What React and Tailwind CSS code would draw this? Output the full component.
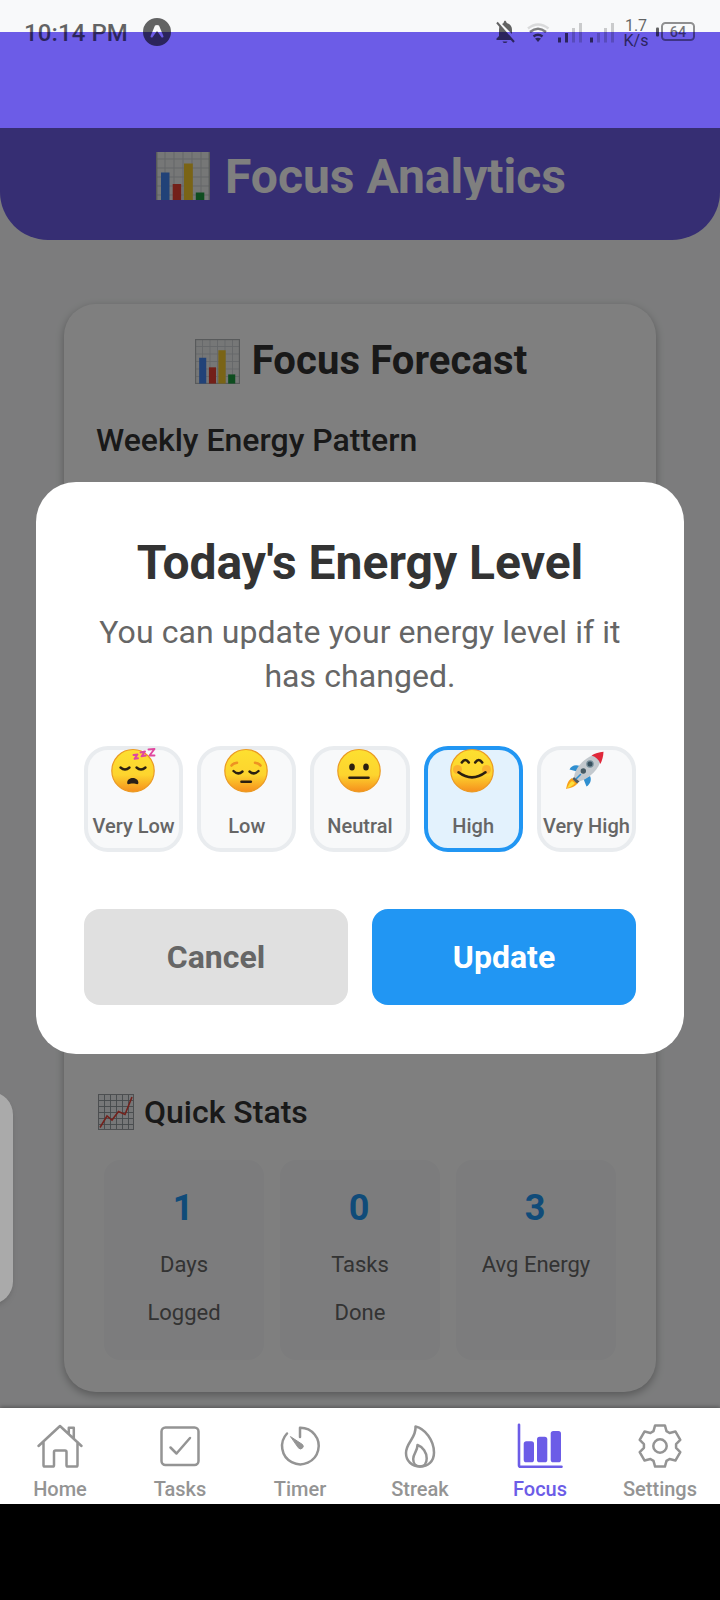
import React from "react";

function BarChartEmoji({ className }) {
  return (
    <svg className={className} viewBox="0 0 54 54" preserveAspectRatio="none">
      <rect width="54" height="54" fill="#eceeef" />
      <path d="M9 0V54M18 0V54M27 0V54M36 0V54M45 0V54M0 9H54M0 18H54M0 27H54M0 36H54M0 45H54" stroke="#c9cdd0" strokeWidth="1" />
      <rect x="0.7" y="0.7" width="52.6" height="52.6" fill="none" stroke="#b0b4b7" strokeWidth="1.4" />
      <rect x="5" y="22.5" width="8.500" height="31" fill="#4384f0" />
      <rect x="16.700" y="34" width="8.500" height="19.500" fill="#e64133" />
      <rect x="28" y="13.500" width="8.800" height="40" fill="#f5c92c" />
      <rect x="39.800" y="42.500" width="8.500" height="11" fill="#1c9a3e" />
    </svg>
  );
}

function LineChartEmoji({ className }) {
  return (
    <svg className={className} viewBox="0 0 36 36">
      <rect width="36" height="36" fill="#eceff1" />
      <path d="M6.500 0V36M12.500 0V36M18.500 0V36M24.500 0V36M30.500 0V36M0 6.500H36M0 12.500H36M0 18.500H36M0 24.500H36M0 30.500H36" stroke="#8b9296" strokeWidth="0.9" />
      <rect x="0.5" y="0.500" width="35" height="35" fill="none" stroke="#9a9fa3" />
      <path d="M2 33.500L9 22L14 26L20.500 17.500L27 20.500L34 3" fill="none" stroke="#e5443a" strokeWidth="1.6" />
    </svg>
  );
}

function Face({ children }) {
  return (
    <svg className="-mt-px mr-0.5 h-11 w-11 overflow-visible" viewBox="0 0 44 44" fill="none" strokeLinecap="round" strokeLinejoin="round">
      <defs>
        <linearGradient id="skin" x1="0" y1="0" x2="0" y2="1">
          <stop offset="0" stopColor="#fde030" />
          <stop offset="0.6" stopColor="#fdd42e" />
          <stop offset="1" stopColor="#f68f1d" />
        </linearGradient>
      </defs>
      <circle cx="22" cy="21.700" r="21.200" fill="url(#skin)" stroke="#eb9a22" strokeWidth="1.2" />
      {children}
    </svg>
  );
}

const faces = {
  sleepy: (
    <Face>
      <path d="M9.500 18.500Q14 22.500 18.500 18.500M25.500 18.500Q30 22.500 34.500 18.500" stroke="#2b1f10" strokeWidth="2.400" />
      <path d="M16.200 33.500C16.500 27.500 27 27.500 27.400 33.500C27.500 36.500 25 34.500 21.800 34.500C18.500 34.500 16 36.500 16.200 33.500Z" fill="#2b2018" />
      <path d="M22.500 6L26.500 5.500L23.500 9.800L27 9.300M29.500 3.500L34 2.500L30.500 7.300L34.800 6.500M37.500 0.500L43.500 0L38.500 6.500L43.500 6.500" stroke="#e0479e" strokeWidth="1.9" />
    </Face>
  ),
  pensive: (
    <Face>
      <path d="M9.500 22Q14 26.500 18.500 22.500M25.500 22.500Q30 26.500 34.500 22" stroke="#2b1f10" strokeWidth="2.400" />
      <path d="M7.500 16.500Q9.500 14 13 13.800M31 13.800Q34.500 14 36.500 16.500" stroke="#ee9322" strokeWidth="2.600" />
      <path d="M17.500 32.700H26.800" stroke="#2b1f10" strokeWidth="2.600" />
    </Face>
  ),
  neutral: (
    <Face>
      <ellipse cx="15" cy="18" rx="2.800" ry="3.600" fill="#2b1f10" />
      <ellipse cx="29" cy="18" rx="2.800" ry="3.600" fill="#2b1f10" />
      <path d="M12.500 28.800H31.500" stroke="#2b1f10" strokeWidth="2.600" />
    </Face>
  ),
  smiling: (
    <Face>
      <circle cx="7.500" cy="20.500" r="4.500" fill="#f9852f" fillOpacity="0.450" />
      <circle cx="36.500" cy="20.500" r="4.500" fill="#f9852f" fillOpacity="0.450" />
      <path d="M11.800 13.500Q15.300 8.500 18.800 13.500M25.200 13.500Q28.700 8.500 32.200 13.500" stroke="#2b1f10" strokeWidth="2.600" />
      <path d="M8.500 23.300Q22 33.500 35.500 23.300" stroke="#2b1f10" strokeWidth="2.600" />
    </Face>
  ),
  rocket: (
    <svg className="-mt-px mr-0.5 h-11 w-11 overflow-visible" viewBox="0 0 44 44">
      <path d="M9 29C4 32 4 37 3 40C7 39 12 38 15 34Z" fill="#f9a11b" />
      <path d="M9 32C6.500 34 5.500 36.500 4 39C8 38 10 36.500 12 34Z" fill="#fde03a" />
      <path d="M17 17C12 15 8 17 6.500 20.500L14 22.500Z" fill="#2f8fd0" />
      <path d="M27 27C29 31 27 35.500 23.500 37.500L20.500 30Z" fill="#2f8fd0" />
      <path d="M11 28C12 20 20 7 40 3C38 20 26 30 16 32.500Z" fill="#c3c9ce" />
      <path d="M11 28L9.500 30L14 34.500L16.500 32.500Z" fill="#515c63" />
      <path d="M28.500 6.500C32 4.500 36 3.300 40.500 2.800C40.300 7.500 39.200 11.500 37.400 15C36 10.500 33 8 28.500 6.500Z" fill="#e0283a" />
      <circle cx="27" cy="15" r="3.800" fill="#78909c" />
      <circle cx="27" cy="15" r="2.500" fill="#37505e" />
      <circle cx="20.300" cy="22" r="2.700" fill="#455a64" />
      <path d="M13.500 29.500L17.500 25.500" stroke="#2f8fd0" strokeWidth="1.500" strokeLinecap="round" />
    </svg>
  ),
};

const toothPoints = [[-6.500, -14.800], [-4.900, -20.600], [4.900, -20.600], [6.500, -14.800]];
const gearPath =
  "M" +
  [0, 60, 120, 180, 240, 300]
    .flatMap((deg) => {
      const a = (deg * Math.PI) / 180;
      return toothPoints.map(([x, y]) =>
        `${(24 + x * Math.cos(a) - y * Math.sin(a)).toFixed(2)} ${(24 + x * Math.sin(a) + y * Math.cos(a)).toFixed(2)}`
      );
    })
    .join("L") +
  "Z";

const tabs = [
  {
    label: "Home",
    icon: <path d="M2.500 24L24 4L45.500 24M7.500 20V43.200Q7.500 44.500 8.800 44.500H16.800Q18 44.500 18 43.200V30Q18 28.500 19.500 28.500H29Q30.500 28.500 30.500 30V43.200Q30.500 44.500 31.800 44.500H40.200Q41.500 44.500 41.500 43.200V20M32.800 11V5.700H37.800V16" />,
  },
  {
    label: "Tasks",
    icon: (
      <>
        <rect x="5.500" y="5.500" width="37" height="37.500" rx="4" />
        <path d="M14.500 25.500L20.500 31.500L34 16" />
      </>
    ),
  },
  {
    label: "Timer",
    icon: (
      <>
        <path d="M24 15V5.700A18.300 18.300 0 1 1 11 11.500" />
        <path d="M14.800 14.800L26.500 22.500A2.600 2.600 0 0 1 22.500 26Z" fill="currentColor" strokeWidth="1" />
      </>
    ),
  },
  {
    label: "Streak",
    icon: (
      <>
        <path d="M19.500 4.500C29 6.500 38 18.500 38 30.500C38 39.500 32 44.500 24 44.500C16 44.500 10 39 10 31C10 20.500 20.500 16 19.500 4.500Z" />
        <path d="M21.500 23C27 25 30.700 30.500 30.700 36.500C30.700 41.500 28 44.500 24 44.500C20 44.500 17.200 41.500 17.200 37C17.200 31.500 21.500 29.500 21.500 23Z" />
      </>
    ),
  },
  {
    label: "Focus",
    active: true,
    icon: (
      <>
        <path d="M3 2.800V43.300Q3 44.800 4.500 44.800H45.500" strokeWidth="2.600" />
        <g fill="currentColor" stroke="none">
          <rect x="7.700" y="19.300" width="10.300" height="21" rx="2.600" />
          <rect x="21" y="14.800" width="10.300" height="25.500" rx="2.600" />
          <rect x="34.700" y="9" width="10.300" height="31.300" rx="2.600" />
        </g>
      </>
    ),
  },
  {
    label: "Settings",
    icon: (
      <>
        <path d={gearPath} />
        <circle cx="24" cy="24" r="6.700" />
      </>
    ),
  },
];

const levels = [
  { label: "Very Low", icon: "sleepy" },
  { label: "Low", icon: "pensive" },
  { label: "Neutral", icon: "neutral" },
  { label: "High", icon: "smiling", selected: true },
  { label: "Very High", icon: "rocket" },
];

const stats = [
  { value: "1", lines: ["Days", "Logged"] },
  { value: "0", lines: ["Tasks", "Done"] },
  { value: "3", lines: ["Avg Energy"] },
];

function StatusBar() {
  return (
    <div className="absolute inset-x-0 top-0 z-20 flex h-16 items-center pl-6 pr-[25px] opacity-60">
      <span className="pt-0.5 text-[24px] leading-none font-medium tracking-[0.1px] whitespace-nowrap">10:14 PM</span>
      <svg className="ml-[15px] h-7 w-7" viewBox="0 0 28 28">
        <path fillRule="evenodd" d="M14 0A14 14 0 1 1 14 28A14 14 0 1 1 14 0ZM12 7.500L7.500 18.200Q7.500 20 9.300 19.500L14 13L18.700 19.500Q20.500 20 20.500 18.200L16 7.500Q14 6.500 12 7.500Z" />
      </svg>
      <svg className="ml-auto h-12 w-[200px]" viewBox="495 8 200 48">
        <path d="M496.500 40V38.500L499 36V29.500Q499 27 500 25.500L511.500 40ZM502 24Q503 23.300 503.500 23Q504 20.500 505 20.500Q506 20.500 506.800 23Q512 24.500 512 30V34ZM502.500 41.500H507.500Q507 43 505 43Q503 43 502.500 41.500Z" />
        <path d="M497 22.500L514 42" stroke="black" strokeWidth="2" />
        <g fill="none" strokeWidth="2.500">
          <path d="M528 28.500Q538 20.500 548.500 28.500" stroke="black" opacity="0.200" />
          <path d="M530 32Q538 25.500 546 32" stroke="black" opacity="0.800" />
          <path d="M533.500 36.500Q538 33 542.500 36.500" stroke="black" />
        </g>
        <path d="M535 38.500Q538 37 541 38.500L538 42Z" />
        <path d="M558 37.500h3v5h-3zM565 33h3v9.500h-3zM590 37.500h3v5h-3z" />
        <path d="M572 28h3v14.500h-3zM579 23h3v19.500h-3zM597 33h3v9.500h-3zM604 28h3v14.500h-3zM611 23h3v19.500h-3z" opacity="0.300" />
        <text x="636" y="30.500" textAnchor="middle" fontSize="16" fontWeight="400">1.7</text>
        <text x="636" y="46" textAnchor="middle" fontSize="16" fontWeight="400">K/s</text>
        <rect x="656" y="27.500" width="3" height="9" rx="1" />
        <rect x="662" y="23" width="32" height="17" rx="3.500" fill="none" stroke="black" strokeWidth="2" opacity="0.700" />
        <text x="678" y="37" textAnchor="middle" fontSize="14.500" fontWeight="500" opacity="0.850">64</text>
      </svg>
    </div>
  );
}

function EnergyDialog() {
  return (
    <section className="absolute inset-x-9 top-[482px] z-10 flex h-[572px] flex-col rounded-[40px] bg-white px-12 pt-[49px]">
      <h2 className="text-center text-[48px] leading-[64px] font-bold text-[#333]">Today's Energy Level</h2>
      <p className="mt-[15px] text-center text-[32px] leading-[44px] tracking-[0.07px] text-[#666]">
        You can update your energy level if it
        <br />
        has changed.
      </p>
      <div className="mt-12 grid h-[106px] grid-cols-5 gap-[14px]">
        {levels.map((level) => (
          <button
            key={level.label}
            className={
              "flex flex-col items-center justify-between rounded-3xl border-4 " +
              (level.selected ? "border-[#2196f3] bg-[#e3f2fd]" : "border-[#e9ecef] bg-[#f8f9fa]")
            }
          >
            {faces[level.icon]}
            <span className="mb-[10px] text-[20px] leading-6 font-medium whitespace-nowrap text-[#666]">{level.label}</span>
          </button>
        ))}
      </div>
      <div className="mt-[57px] grid h-24 grid-cols-2 gap-6 text-[32px] font-bold">
        <button className="rounded-2xl bg-[#e0e0e0] text-[#666]">Cancel</button>
        <button className="rounded-2xl bg-[#2196f3] text-white">Update</button>
      </div>
    </section>
  );
}

function TabBar() {
  return (
    <nav className="relative z-10 grid h-24 shrink-0 grid-cols-6 bg-white shadow-[0_-1px_4px_rgba(0,0,0,0.35)]">
      {tabs.map((tab) => (
        <div key={tab.label} className={"flex flex-col items-center pt-[14px] " + (tab.active ? "text-[#6c5ce7]" : "text-[#949494]")}>
          <svg className="h-12 w-12 shrink-0" viewBox="0 0 48 48" fill="none" stroke="currentColor" strokeWidth="2.500" strokeLinecap="round" strokeLinejoin="round">
            {tab.icon}
          </svg>
          <span className="mt-[7px] text-[20px] leading-6 font-medium">{tab.label}</span>
        </div>
      ))}
    </nav>
  );
}

export default function App() {
  return (
    <div className="relative flex h-[1600px] w-[720px] flex-col overflow-hidden bg-black font-[Roboto,sans-serif]">
      <StatusBar />
      <div className="h-8 shrink-0 bg-[#f8f9fa]" />
      <div className="h-24 shrink-0 bg-[#6c5ce7]" />
      <main className="relative flex h-[1280px] shrink-0 flex-col overflow-hidden bg-[#f8f9fa]">
        <header className="flex h-28 shrink-0 justify-center rounded-b-[48px] bg-[#6c5ce7] pt-6">
          <h1 className="flex h-12 overflow-hidden pl-0.5 text-[48px] leading-[50px] font-bold text-white">
            <BarChartEmoji className="-mt-0.5 mr-[15px] h-[54px] w-[54px] shrink-0" />
            Focus Analytics
          </h1>
        </header>
        <section className="mx-16 mt-16 flex h-[1088px] shrink-0 flex-col rounded-[32px] bg-white px-8 pt-8 shadow-[0_3px_8px_rgba(0,0,0,0.3)]">
          <h2 className="flex items-center justify-center pl-0.5 text-[40px] leading-[50px] font-bold tracking-[0.1px] text-[#333]">
            <BarChartEmoji className="mr-3 h-[45px] w-[45px]" />
            Focus Forecast
          </h2>
          <h3 className="mt-8 text-[32px] leading-[44px] font-medium text-[#333]">Weekly Energy Pattern</h3>
          <div className="flex-1" />
          <h3 className="flex items-center text-[32px] leading-[44px] font-medium text-[#333]">
            <LineChartEmoji className="mr-[10px] ml-0.5 h-9 w-9" />
            Quick Stats
          </h3>
          <div className="mx-2 mt-[26px] mb-8 grid h-[200px] grid-cols-3 gap-4">
            {stats.map((stat) => (
              <div key={stat.value} className="flex flex-col items-center rounded-2xl bg-[#f8f9fa] pt-[25px]">
                <strong className="pr-0.5 text-[36px] leading-[46px] font-bold text-[#2196f3]">{stat.value}</strong>
                <span className="mt-[10px] text-center text-[22px] leading-[48px] text-[#666]">
                  {stat.lines.map((line) => (
                    <span key={line} className="block">{line}</span>
                  ))}
                </span>
              </div>
            ))}
          </div>
        </section>
        <div className="absolute inset-0 bg-black/50" />
      </main>
      <TabBar />
      <EnergyDialog />
      <div className="absolute top-[1092px] -left-8 h-[212px] w-[45px] rounded-[26px] bg-[#aaa] shadow-md" />
    </div>
  );
}
